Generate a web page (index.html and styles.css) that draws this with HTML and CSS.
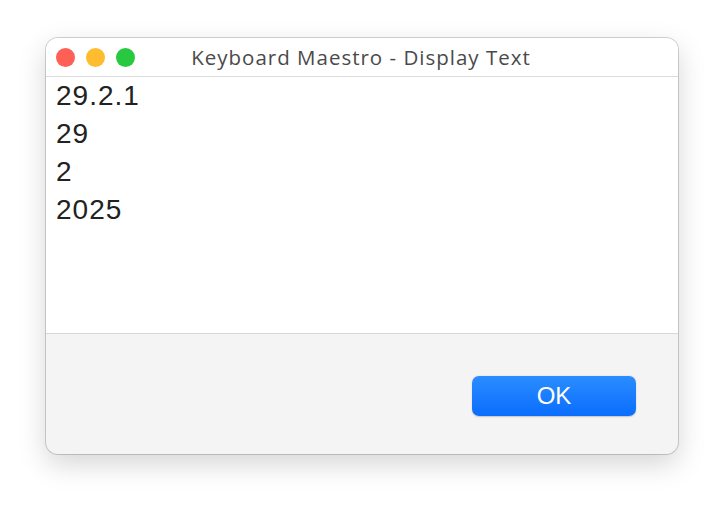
FILE: index.html
```html
<!DOCTYPE html>
<html>
<head>
<meta charset="utf-8">
<link rel="stylesheet" href="styles.css">
</head>
<body>
<div class="window">
  <div class="titlebar">
    <div class="lights">
      <span class="light red"></span>
      <span class="light yellow"></span>
      <span class="light green"></span>
    </div>
    <div class="title">Keyboard Maestro - Display Text</div>
  </div>
  <div class="content">
    <div class="line">29.2.1</div>
    <div class="line">29</div>
    <div class="line">2</div>
    <div class="line">2025</div>
  </div>
  <div class="footer">
    <button class="ok">OK</button>
  </div>
</div>
</body>
</html>
```
FILE: styles.css
```css
html, body {
  margin: 0;
  padding: 0;
  background: #ffffff;
  width: 724px;
  height: 508px;
  overflow: hidden;
}
body {
  font-family: "Liberation Sans", Arial, sans-serif;
  padding-top: 38px;
  padding-left: 46px;
  box-sizing: border-box;
}
.window {
  width: 632px;
  height: 416px;
  border-radius: 12px;
  background: #f4f4f4;
  box-shadow: 0 0 0 1px rgba(0,0,0,0.17), 0 10px 28px rgba(0,0,0,0.17);
  overflow: hidden;
  display: flex;
  flex-direction: column;
}
.titlebar {
  height: 39px;
  flex: none;
  background: #ffffff;
  border-bottom: 1px solid #dcdcdc;
  box-sizing: border-box;
  position: relative;
  display: flex;
  align-items: center;
  justify-content: center;
}
.lights {
  position: absolute;
  left: 10px;
  top: 10px;
  display: flex;
  gap: 11px;
}
.light {
  width: 19px;
  height: 19px;
  border-radius: 50%;
  display: block;
}
.red { background: #fe5f57; }
.yellow { background: #febc2e; }
.green { background: #28c840; }
.title {
  font-family: "Open Sans", "Liberation Sans", sans-serif;
  font-size: 20.5px;
  letter-spacing: 1px;
  color: #4a4a4a;
  padding-right: 2px;
}
.content {
  height: 257px;
  flex: none;
  background: #ffffff;
  border-bottom: 1px solid #d8d8d8;
  box-sizing: border-box;
  padding: 0 10px 0;
}
.line {
  font-size: 28px;
  letter-spacing: 1px;
  line-height: 38px;
  color: #222222;
}
.footer {
  flex: 1;
  display: flex;
  justify-content: flex-end;
  align-items: flex-start;
  padding: 42px 42px 0 0;
}
.ok {
  width: 164px;
  height: 40px;
  border: none;
  border-radius: 7px;
  background: linear-gradient(#2b8dff, #0a6dfd);
  color: #ffffff;
  font-family: "Liberation Sans", Arial, sans-serif;
  font-size: 24px;
  padding: 0;
  box-shadow: 0 0.5px 1.5px rgba(0,0,0,0.2);
}
```
